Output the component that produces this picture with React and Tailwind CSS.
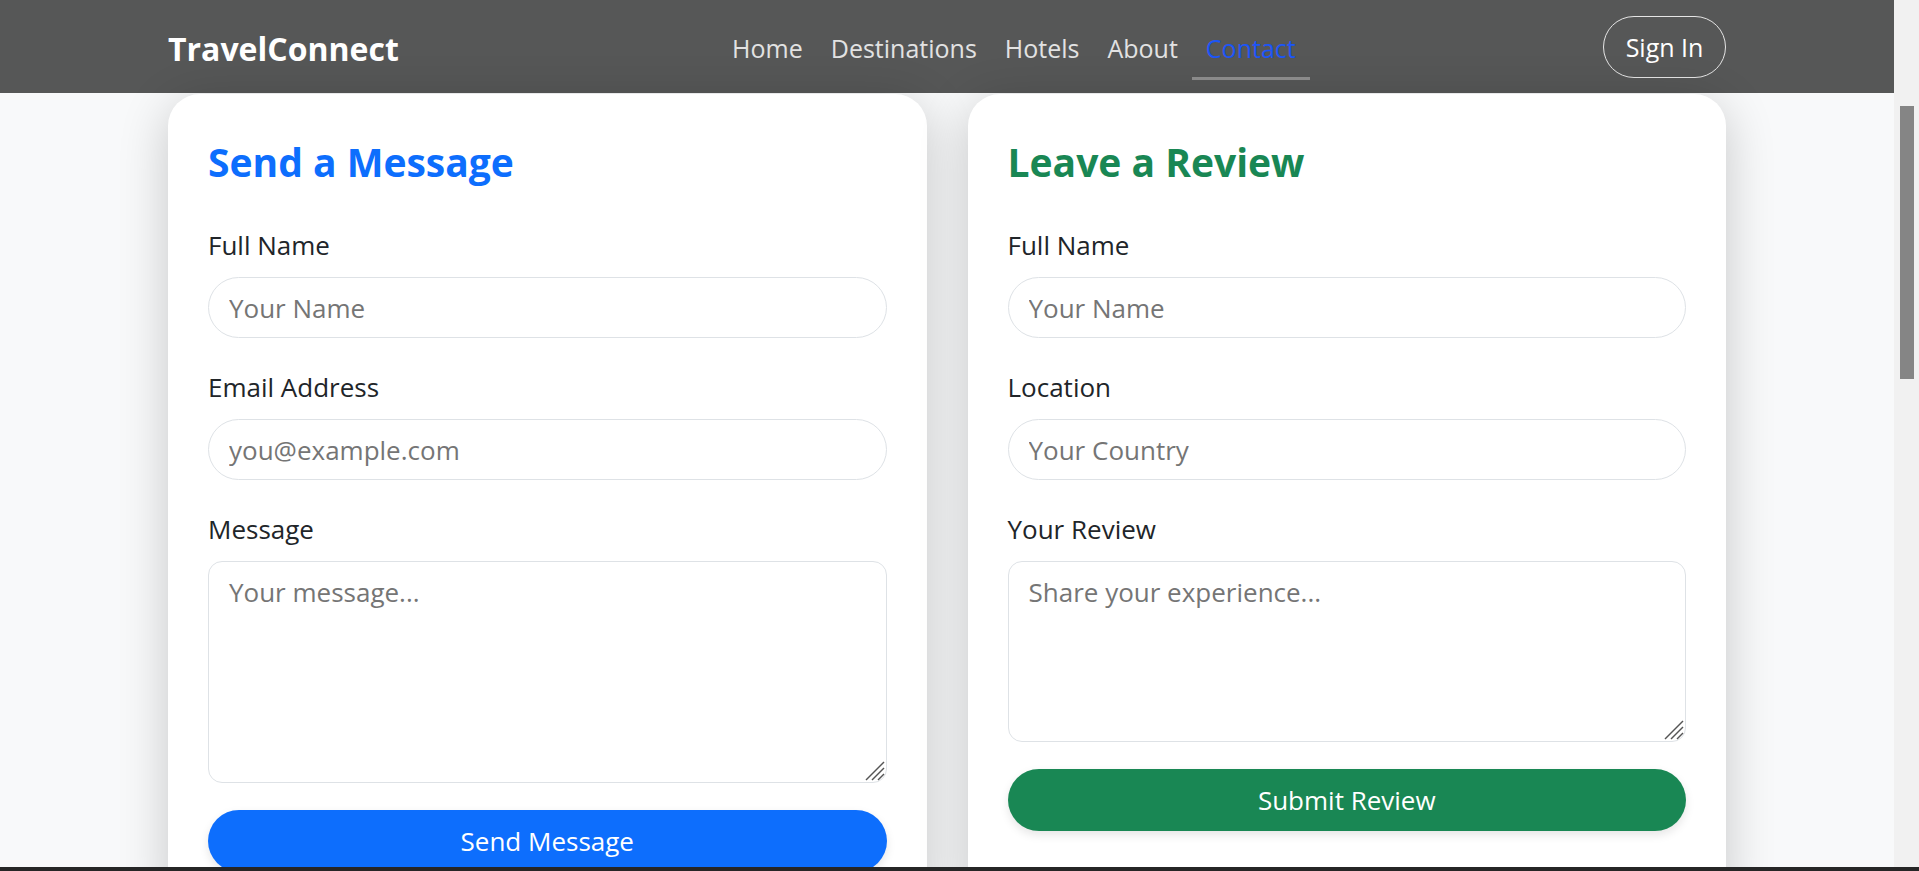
import { useState } from 'react';

const navLinks = ['Home', 'Destinations', 'Hotels', 'About', 'Contact'];

function Field({ label, placeholder, type = 'text' }) {
  return (
    <div className="mb-[32px]">
      <label className="block text-[26px] leading-[34px] text-[#212529] mb-[15px]">{label}</label>
      <input
        type={type}
        placeholder={placeholder}
        className="block w-full h-[61px] px-[20px] text-[26px] leading-[39px] text-[#212529] bg-white border border-[#dee2e6] rounded-full outline-none placeholder:text-[#757575]"
      />
    </div>
  );
}

function Area({ label, placeholder, height }) {
  return (
    <div className="mb-[27px]">
      <label className="block text-[26px] leading-[34px] text-[#212529] mb-[15px]">{label}</label>
      <div className="relative">
        <textarea
          placeholder={placeholder}
          className={`block w-full px-[20px] py-[11px] text-[26px] leading-[39px] text-[#212529] bg-white border border-[#dee2e6] rounded-[14px] outline-none resize-none placeholder:text-[#757575] ${height}`}
        />
        {/* resize grip */}
        <svg className="absolute right-[2px] bottom-[2px]" width="22" height="22" viewBox="0 0 22 22">
          <line x1="21" y1="3" x2="3" y2="21" stroke="#555" strokeWidth="1.4" />
          <line x1="21" y1="9" x2="9" y2="21" stroke="#555" strokeWidth="1.4" />
          <line x1="21" y1="15" x2="15" y2="21" stroke="#555" strokeWidth="1.4" />
        </svg>
      </div>
    </div>
  );
}

function Card({ title, titleColor, children }) {
  return (
    <div className="bg-white rounded-[32px] shadow-[0_10px_50px_rgba(0,0,0,0.2)] px-[40px] pt-[43px] pb-[40px]">
      <h2 className={`text-[39px] leading-[49px] font-bold mb-[42px] ${titleColor}`}>{title}</h2>
      {children}
    </div>
  );
}

export default function App() {
  const [active] = useState('Contact');

  return (
    <div className="h-[871px] w-full flex flex-col overflow-hidden bg-[#f8f9fa]" style={{ fontFamily: '"Open Sans", "Noto Sans", sans-serif' }}>
      <div className="flex flex-1 min-h-0">
        <div className="flex-1 flex flex-col min-w-0">
          {/* navbar */}
          <nav className="h-[93px] shrink-0 bg-[#565757]">
            <div className="w-[1558px] mx-auto h-full flex items-center">
              <a className="text-[32px] font-bold text-white mr-[26px] pt-[4px]">TravelConnect</a>
              <ul className="flex self-stretch mx-auto">
                {navLinks.map((l) => (
                  <li key={l} className="relative h-full flex items-center px-[14px] pt-[4px]">
                    <a className={`text-[25px] leading-[39px] ${l === active ? 'text-[#1c55f7]' : 'text-[#e2e2e2]'}`}>{l}</a>
                    {l === active && <span className="absolute left-0 right-0 top-[77px] h-[3px] bg-[#8a8a8a]"></span>}
                  </li>
                ))}
              </ul>
              <button className="w-[123px] h-[62px] pt-[3px] rounded-full border border-[#e5e5e5] text-white text-[25px]">Sign In</button>
            </div>
          </nav>

          {/* content */}
          <div className="flex-1 min-h-0 pt-[1px]">
            <div className="w-[1558px] mx-auto grid grid-cols-2 gap-[41px]">
              <Card title="Send a Message" titleColor="text-[#0d6efd]">
                <Field label="Full Name" placeholder="Your Name" />
                <Field label="Email Address" placeholder="you@example.com" type="email" />
                <Area label="Message" placeholder="Your message..." height="h-[222px]" />
                <button className="w-full h-[62px] rounded-full bg-[#0d6efd] text-white text-[26px] shadow-[0_4px_10px_rgba(0,0,0,0.1)]">Send Message</button>
              </Card>
              <Card title="Leave a Review" titleColor="text-[#198754]">
                <Field label="Full Name" placeholder="Your Name" />
                <Field label="Location" placeholder="Your Country" />
                <Area label="Your Review" placeholder="Share your experience..." height="h-[181px]" />
                <button className="w-full h-[62px] rounded-full bg-[#198754] text-white text-[26px] shadow-[0_4px_10px_rgba(0,0,0,0.1)]">Submit Review</button>
              </Card>
            </div>
          </div>
        </div>

        {/* scrollbar */}
        <div className="w-[25px] shrink-0 bg-[#f1f1f1]">
          <div className="mt-[106px] ml-[6px] w-[14px] h-[273px] bg-[#858585]"></div>
        </div>
      </div>
      <div className="h-[4px] shrink-0 bg-[#262626]"></div>
    </div>
  );
}
